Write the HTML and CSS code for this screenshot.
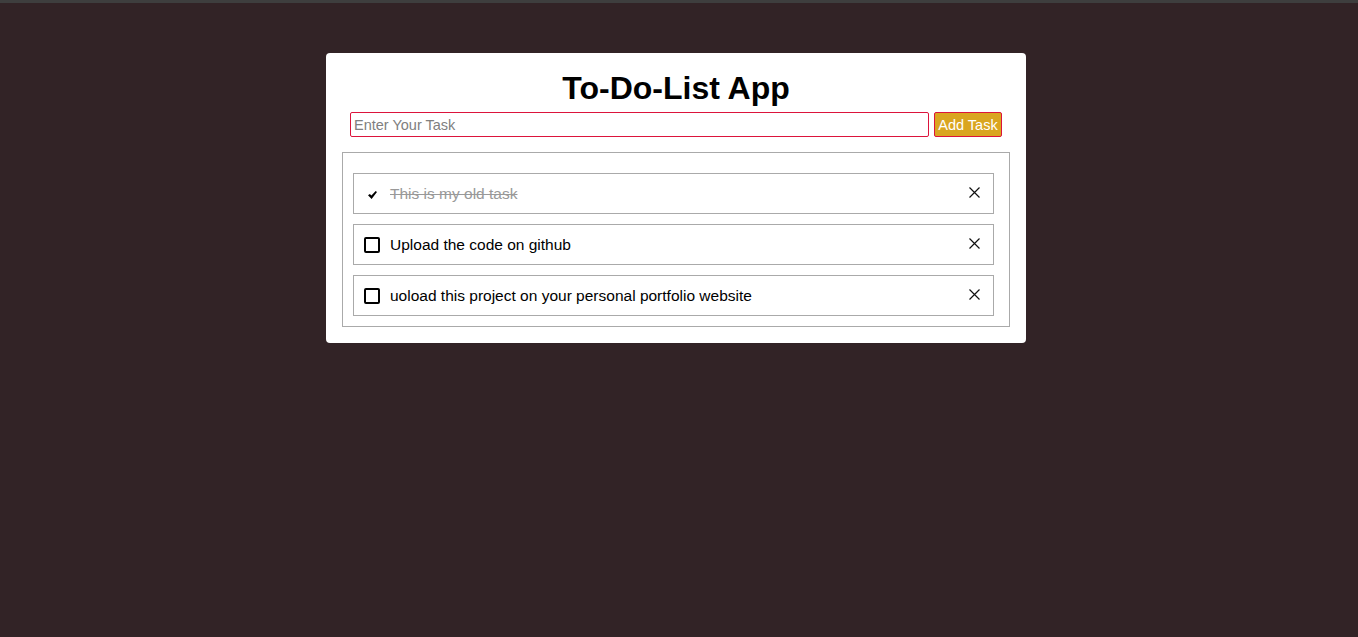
FILE: index.html
```html
<!DOCTYPE html>
<html lang="en">
<head>
<meta charset="utf-8">
<title>To-Do-List App</title>
<link rel="stylesheet" href="styles.css">
</head>
<body>
<div class="topbar"></div>
<main class="card">
  <h1 class="title">To-Do-List App</h1>
  <form class="add-row">
    <input class="task-input" type="text" placeholder="Enter Your Task">
    <button class="add-btn" type="button">Add Task</button>
  </form>
  <ul class="task-list">
    <li class="task done">
      <span class="check checked">
        <svg viewBox="0 0 9 8" width="9" height="8"><path d="M0 4.3 L1.9 2.9 L3.4 4.6 L7.7 0 L9 1.1 L3.6 8 Z" fill="#000"/></svg>
      </span>
      <span class="task-text">This is my old task</span>
      <span class="remove"><svg viewBox="0 0 11 11" width="11" height="11"><path d="M0.5 0.5 L10.5 10.5 M10.5 0.5 L0.5 10.5" stroke="#111" stroke-width="1.2"/></svg></span>
    </li>
    <li class="task">
      <span class="check"></span>
      <span class="task-text">Upload the code on github</span>
      <span class="remove"><svg viewBox="0 0 11 11" width="11" height="11"><path d="M0.5 0.5 L10.5 10.5 M10.5 0.5 L0.5 10.5" stroke="#111" stroke-width="1.2"/></svg></span>
    </li>
    <li class="task">
      <span class="check"></span>
      <span class="task-text">uoload this project on your personal portfolio website</span>
      <span class="remove"><svg viewBox="0 0 11 11" width="11" height="11"><path d="M0.5 0.5 L10.5 10.5 M10.5 0.5 L0.5 10.5" stroke="#111" stroke-width="1.2"/></svg></span>
    </li>
  </ul>
</main>
</body>
</html>
```
FILE: styles.css
```css
html, body {
  margin: 0;
  padding: 0;
}
body {
  background: #322326;
  font-family: "Liberation Sans", Arial, sans-serif;
  min-height: 637px;
}
.topbar {
  height: 3px;
  background: #3e3e3e;
}
.card {
  width: 700px;
  box-sizing: border-box;
  margin: 50px calc(50% - 347px) 0 calc(50% - 353px);
  background: #fff;
  border-radius: 4px;
  padding: 17px 16px 16px;
}
.title {
  margin: 0;
  font-size: 32px;
  font-weight: bold;
  text-align: center;
  line-height: 37px;
  color: #000;
}
.add-row {
  display: flex;
  gap: 5px;
  margin: 5px 8px 0;
}
.task-input {
  flex: 1;
  height: 25px;
  box-sizing: border-box;
  border: 1px solid #dc143c;
  border-radius: 2px;
  padding: 0 3px;
  font-family: "Liberation Sans", Arial, sans-serif;
  font-size: 14.5px;
  color: #333;
  outline: none;
}
.task-input::placeholder {
  color: #808080;
}
.add-btn {
  width: 68px;
  height: 25px;
  box-sizing: border-box;
  background: #daa520;
  border: 1px solid #dc143c;
  border-radius: 2px;
  color: #fff;
  font-family: "Liberation Sans", Arial, sans-serif;
  font-size: 14.5px;
  padding: 0;
}
.task-list {
  list-style: none;
  margin: 15px 0 0;
  padding: 20px 15px 10px 10px;
  border: 1px solid #aaa;
  display: flex;
  flex-direction: column;
  gap: 10px;
}
.task {
  height: 41px;
  box-sizing: border-box;
  border: 1px solid #aaa;
  display: flex;
  align-items: center;
  padding: 0 13px 0 10px;
  font-size: 15.5px;
  color: #000;
}
.check {
  width: 16px;
  height: 16px;
  box-sizing: border-box;
  border: 2px solid #000;
  border-radius: 2px;
  flex: none;
  margin-right: 10px;
  display: flex;
  align-items: center;
  justify-content: center;
}
.check.checked {
  border: none;
  padding-top: 3px;
}
.task-text {
  flex: 1;
}
.done .task-text {
  color: #999;
  text-decoration: line-through;
}
.remove {
  width: 11px;
  height: 11px;
  display: flex;
  margin-top: -3px;
}
```
